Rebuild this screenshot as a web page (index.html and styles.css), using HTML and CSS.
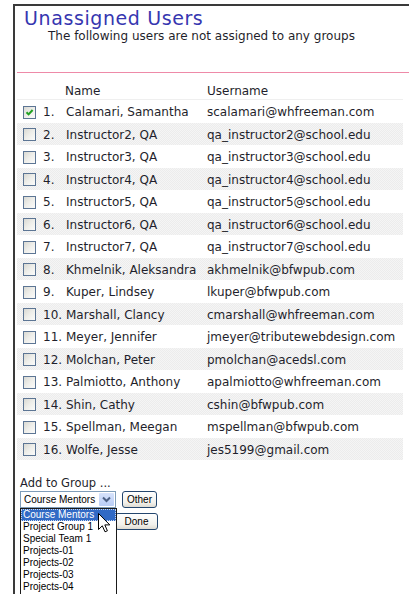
FILE: index.html
```html
<!DOCTYPE html>
<html>
<head>
<meta charset="utf-8">
<title>Unassigned Users</title>
<link rel="stylesheet" href="styles.css">
</head>
<body>
<div class="frame">
  <h1 class="title">Unassigned Users</h1>
  <p class="subtitle">The following users are not assigned to any groups</p>
  <div class="rule"></div>

  <div class="users">
    <div class="head">
      <span class="c-cb"></span><span class="c-num"></span>
      <span class="c-name">Name</span><span class="c-user">Username</span>
    </div>
    <div class="row"><span class="cb checked"><svg viewBox="0 0 11 11" width="11" height="11"><path d="M2.5 5.2 L4.6 7.4 L8.6 3" fill="none" stroke="#21a121" stroke-width="2"/></svg></span><span class="c-num">1.</span><span class="c-name">Calamari, Samantha</span><span class="c-user">scalamari@whfreeman.com</span></div>
    <div class="row"><span class="cb"></span><span class="c-num">2.</span><span class="c-name">Instructor2, QA</span><span class="c-user">qa_instructor2@school.edu</span></div>
    <div class="row"><span class="cb"></span><span class="c-num">3.</span><span class="c-name">Instructor3, QA</span><span class="c-user">qa_instructor3@school.edu</span></div>
    <div class="row"><span class="cb"></span><span class="c-num">4.</span><span class="c-name">Instructor4, QA</span><span class="c-user">qa_instructor4@school.edu</span></div>
    <div class="row"><span class="cb"></span><span class="c-num">5.</span><span class="c-name">Instructor5, QA</span><span class="c-user">qa_instructor5@school.edu</span></div>
    <div class="row"><span class="cb"></span><span class="c-num">6.</span><span class="c-name">Instructor6, QA</span><span class="c-user">qa_instructor6@school.edu</span></div>
    <div class="row"><span class="cb"></span><span class="c-num">7.</span><span class="c-name">Instructor7, QA</span><span class="c-user">qa_instructor7@school.edu</span></div>
    <div class="row"><span class="cb"></span><span class="c-num">8.</span><span class="c-name">Khmelnik, Aleksandra</span><span class="c-user">akhmelnik@bfwpub.com</span></div>
    <div class="row"><span class="cb"></span><span class="c-num">9.</span><span class="c-name">Kuper, Lindsey</span><span class="c-user">lkuper@bfwpub.com</span></div>
    <div class="row"><span class="cb"></span><span class="c-num">10.</span><span class="c-name">Marshall, Clancy</span><span class="c-user">cmarshall@whfreeman.com</span></div>
    <div class="row"><span class="cb"></span><span class="c-num">11.</span><span class="c-name">Meyer, Jennifer</span><span class="c-user">jmeyer@tributewebdesign.com</span></div>
    <div class="row"><span class="cb"></span><span class="c-num">12.</span><span class="c-name">Molchan, Peter</span><span class="c-user">pmolchan@acedsl.com</span></div>
    <div class="row"><span class="cb"></span><span class="c-num">13.</span><span class="c-name">Palmiotto, Anthony</span><span class="c-user">apalmiotto@whfreeman.com</span></div>
    <div class="row"><span class="cb"></span><span class="c-num">14.</span><span class="c-name">Shin, Cathy</span><span class="c-user">cshin@bfwpub.com</span></div>
    <div class="row"><span class="cb"></span><span class="c-num">15.</span><span class="c-name">Spellman, Meegan</span><span class="c-user">mspellman@bfwpub.com</span></div>
    <div class="row"><span class="cb"></span><span class="c-num">16.</span><span class="c-name">Wolfe, Jesse</span><span class="c-user">jes5199@gmail.com</span></div>
  </div>

  <div class="group">
    <div class="group-label">Add to Group ...</div>
    <div class="controls">
      <div class="select-wrap">
        <div class="select">
          <span class="select-text">Course Mentors</span>
          <span class="select-btn"><svg viewBox="0 0 15 13" width="15" height="13"><path d="M4 4.5 L7.5 8 L11 4.5" fill="none" stroke="#4d6185" stroke-width="2"/></svg></span>
        </div>
        <ul class="listbox">
          <li class="sel">Course Mentors</li>
          <li>Project Group 1</li>
          <li>Special Team 1</li>
          <li>Projects-01</li>
          <li>Projects-02</li>
          <li>Projects-03</li>
          <li>Projects-04</li>
        </ul>
        <svg class="pointer" viewBox="0 0 13 20" width="13" height="20"><path d="M0.5 0.5 L0.5 16.5 L4.3 12.8 L7 18.8 L9.4 17.8 L6.8 11.9 L11.8 11.9 Z" fill="#fff" stroke="#000" stroke-width="1" stroke-linejoin="miter"/></svg>
      </div>
      <button class="btn btn-other">Other</button>
    </div>
    <button class="btn btn-done">Done</button>
  </div>
</div>
</body>
</html>
```
FILE: styles.css
```css
html, body {
  margin: 0;
  padding: 0;
  background: #fff;
  overflow: hidden;
  height: 594px;
}

body {
  font-family: "DejaVu Sans", Verdana, sans-serif;
  font-size: 12px;
  color: #1f1f2c;
}

.frame {
  margin: 4px 0 0 13px;
  border-top: 2px solid #3a3a3a;
  border-left: 2px solid #3a3a3a;
  height: 600px;
}

.title {
  margin: 1px 0 0 9px;
  font-size: 19px;
  letter-spacing: 0.6px;
  line-height: 22px;
  font-weight: normal;
  color: #3636b0;
}

.subtitle {
  margin: 0 0 0 33px;
  line-height: 14px;
  font-size: 12px;
}

.rule {
  margin: 29px 0 0 2px;
  height: 1px;
  background: #ee8aa8;
}

.users {
  margin-left: 2px;
  width: 386px;
}

.head,
.row {
  display: flex;
  align-items: center;
  line-height: 14px;
  white-space: nowrap;
}

.head {
  height: 15px;
  padding-top: 11px;
  align-items: flex-start;
  border-bottom: 1px solid #efefef;
}

.head .c-name { margin-left: -1px; }
.head .c-user { margin-left: 1px; }

.row {
  height: 22.5px;
  padding-top: 2px;
  box-sizing: border-box;
}

/* dithered shading on every other user row */
.row:nth-child(odd) {
  background-color: #f0f0f0;
  background-image: repeating-conic-gradient(#ececec 0 25%, #f5f5f5 0 50%);
  background-size: 2px 2px;
}

.c-cb {
  width: 13px;
  margin-left: 6px;
}

.cb {
  width: 11px;
  height: 11px;
  margin-left: 6px;
  border: 1px solid #5c7594;
  background: linear-gradient(135deg, #d9d9d3 0%, #eeeeea 50%, #fbfbfa 100%);
  display: flex;
}

.c-num {
  width: 23px;
  margin-left: 7px;
}

.c-name {
  width: 141px;
}

.c-user {
  flex: 1;
}

.group {
  padding: 16px 0 0 5px;
}

.group-label {
  font-size: 11.5px;
  line-height: 14px;
}

.controls {
  display: flex;
  align-items: flex-start;
  margin-top: 1px;
}

.select-wrap {
  position: relative;
}

.select {
  width: 94px;
  height: 15px;
  border: 1px solid #7f9db9;
  background: #fff;
  display: flex;
  align-items: center;
  justify-content: space-between;
  font-family: "Liberation Sans", Arial, sans-serif;
  font-size: 10px;
  color: #000;
}

.select-text {
  padding-left: 3px;
}

.select-btn {
  width: 15px;
  height: 13px;
  margin-right: 1px;
  background: linear-gradient(#d6e2fb, #b9cdf6);
  border-radius: 1px;
  display: flex;
}

.listbox {
  position: absolute;
  top: 17px;
  left: 0;
  width: 95px;
  margin: 0;
  padding: 0 0 20px;
  list-style: none;
  background: #fff;
  border: 1px solid #1a1a1a;
  font-family: "Liberation Sans", Arial, sans-serif;
  font-size: 10px;
  line-height: 12px;
  color: #000;
  z-index: 2;
}

.listbox li {
  padding-left: 2px;
  height: 12px;
}

.listbox li.sel {
  background: #316ac5;
  color: #fff;
  outline: 1px dotted #c9d7ee;
  outline-offset: -1px;
}

.pointer {
  position: absolute;
  left: 78px;
  top: 22px;
  z-index: 3;
}

.btn {
  display: block;
  font-family: "Liberation Sans", Arial, sans-serif;
  font-size: 10px;
  color: #000;
  border: 1px solid #24466e;
  border-radius: 3px;
  background: linear-gradient(#ffffff, #f2f1ec 70%, #dedbd2);
  padding: 0;
  line-height: 14px;
}

.btn-other {
  width: 35px;
  height: 17px;
  margin-left: 6px;
}

.btn-done {
  width: 43px;
  height: 17px;
  margin: 5px 0 0 95px;
}
```
